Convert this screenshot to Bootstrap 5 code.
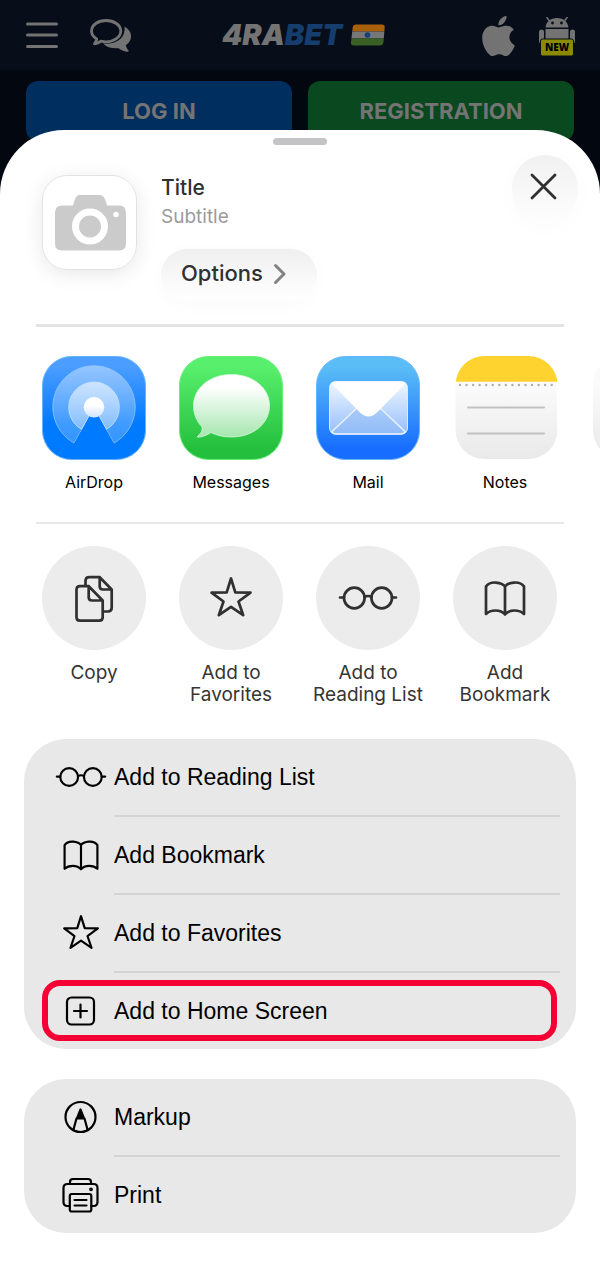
<!DOCTYPE html>
<html lang="en">
<head>
<meta charset="utf-8">
<meta name="viewport" content="width=device-width, initial-scale=1">
<title>Share</title>
<link href="https://cdn.jsdelivr.net/npm/bootstrap@5.3.0/dist/css/bootstrap.min.css" rel="stylesheet">
<style>
  body { background: #03070f; font-family: Inter, "Liberation Sans", sans-serif; color: #000; overflow-x: hidden; }
  button { font: inherit; color: inherit; }
  svg { display: block; flex-shrink: 0; }
  .plain { background: none; border: 0; padding: 0; }
  .site-bar { height: 70px; background: #070e19; padding: 0 25px 0 26px; color: #737373; }
  .brand { width: 170px; font-size: 29px; line-height: 32px; font-weight: 900; font-style: italic; color: #737373; text-decoration: none; }
  .brand b { font-weight: 900; color: #153d6e; }
  .auth { padding: 11px 26px 0; gap: 16px; }
  .auth .btn { height: 60px; border-radius: 12px; border: 0; font-size: 22px; font-weight: 700; color: #747474; background: #002e5f; }
  .auth .btn.join { background: #0a481f; }
  .sheet { position: relative; background: #fff; border-radius: 64px 64px 0 0; margin-top: -11px; min-height: calc(100vh - 130px); }
  .grabber { width: 54px; height: 7px; border-radius: 4px; background: #c4c4c6; margin: 8px auto 0; }
  .sheet-head { padding: 10px 22px 23px 42px; }
  .app-thumb { width: 95px; height: 95px; border-radius: 25px; border: 1px solid #e2e2e2; box-shadow: 0 4px 20px #00000018; margin-top: 20px; }
  .head-text { margin: 21px 0 0 24px; }
  .head-text h1 { font-size: 21px; line-height: 24px; font-weight: 500; color: #303030; margin: 0; }
  .head-text p { font-size: 19px; line-height: 24px; color: #9b9b9b; margin: 5px 0 20px; }
  .options { height: 52px; width: 156px; border-radius: 26px; padding: 0 0 3px 20px; font-size: 22px; font-weight: 500; color: #303030; background: linear-gradient(#efefef, #fefefe 90%); box-shadow: 0 4px 22px #00000005; }
  .close-btn { width: 66px; height: 68px; border-radius: 34px; background: linear-gradient(#f1f1f1, #fefefe); box-shadow: 0 4px 24px #00000005; color: #303030; padding: 0 3px 4px 0; }
  .rule { height: 3px; background: #e4e4e4; margin: 0 36px; }
  .rule.thin { height: 2px; background: #e8e8e8; }
  .strip { gap: 33px; padding: 0 0 0 42px; overflow: hidden; }
  .strip > button { width: 104px; flex: none; white-space: nowrap; }
  .apps { margin: 29px 0 28px; }
  .apps span { font-size: 16px; line-height: 24px; margin-top: 10px; }
  .acts { margin: 22px 0 33px; }
  .acts span { font-size: 19px; line-height: 22px; margin-top: 12px; color: #353535; }
  .disc { width: 104px; height: 104px; border-radius: 50%; background: #ececec; color: #303030; }
  .line-icon { fill: none; stroke: currentColor; stroke-width: 2.5; stroke-linecap: round; stroke-linejoin: round; }
  .line-icon.fine { stroke-width: 2.2; }
  .disc .line-icon { stroke-width: 2.7; }
  .panel { background: #e8e8e8; border-radius: 42px; margin: 0 24px 30px; }
  .panel-row { position: relative; height: 76px; width: 100%; padding-left: 31px; gap: 7px; font-family: "Liberation Sans", Arial, sans-serif; font-size: 23px; text-align: left; }
  .split { height: 2px; background: #d4d4d4; margin: 0 16px 0 90px; }
  .marked::after { content: ""; position: absolute; inset: 7px 19px 8px 18px; border: 6px solid #f40034; border-radius: 18px; }
</style>
</head>
<body>
<svg width="0" height="0" class="position-absolute" aria-hidden="true">
  <symbol id="i-glasses" viewBox="22.500 30.500 60 44"><circle cx="38.800" cy="52.500" r="10.300"/><circle cx="66.200" cy="52.500" r="10.300"/><path d="M24.500 52h4M76.500 52h4M49 51.500q3.500-2 7 0"/></symbol>
  <symbol id="i-book" viewBox="22.500 30.500 60 44"><path d="M52.500 41C49.500 37 38 34.500 33.500 41V68.500C38 64 48 63.500 52.500 69C57 63.500 67 64 71.500 68.500V41C67 34.500 55.500 37 52.500 41ZM52.500 41V69"/></symbol>
  <symbol id="i-star" viewBox="22.500 30.500 60 44"><path d="M52.500 33L56.800 46.900L72 47.200L60 56L64.700 69.700L52.500 61.300L40.300 69.700L45 56L33 47.200L48.200 46.900Z"/></symbol>
</svg>

<header class="site-bar d-flex align-items-center justify-content-between">
  <div class="d-flex align-items-center">
    <button class="plain me-2" aria-label="Menu"><svg width="32" height="36" viewBox="0 0 32 36" stroke="currentColor" stroke-width="3.200" stroke-linecap="round"><path d="M1.600 7h28.800M1.600 18h28.800M1.600 29.500h28.800"/></svg></button>
    <button class="plain ms-4" aria-label="Chat"><svg width="42" height="36" viewBox="0 0 42 36"><path d="M16 3.500C24 3.500 30.800 8 30.800 14S24 24.800 16 24.800c-2 0-3.500-.300-5-.700-2 1.500-4 2.300-6.500 2.800 1.200-1.600 2-3.200 2.200-4.900C3.500 20 1.500 17.200 1.500 14 1.500 8 8 3.500 16 3.500Z" fill="none" stroke="currentColor" stroke-width="2.800" stroke-linejoin="round"/><path d="M34.500 9.500c4 2.500 7 6 6.500 10.500-.300 3.500-2.200 6.200-5.200 8.200.5 2 1.500 3.800 3 5.600-.3.900-1 1.200-2 1-3.200-.6-5.800-1.900-8.200-3.600-6 .6-11.600-.7-15.600-4.700 10.500 1 18-3 20.500-9 1-2.700 1.300-5.200 1-8Z" fill="currentColor"/></svg></button>
  </div>
  <a href="#" class="brand d-flex align-items-center"><span>4RA<b>BET</b></span>
    <svg class="ms-2" width="36" height="24" viewBox="0 0 36 24"><defs><clipPath id="flag"><path d="M6 1.500H32q3 0 2.700 3L33.500 19q-.5 3.500-4 3.500H4q-3.500 0-3-3.500L2.700 4.500Q3 1.500 6 1.500Z"/></clipPath></defs><g clip-path="url(#flag)"><path fill="#a9600d" d="M0 1h36v7.500H0z"/><path fill="#777" d="M0 8.500h36v7H0z"/><path fill="#395f25" d="M0 15.500h36V23H0z"/></g><circle cx="17.500" cy="12" r="2.800" fill="#123f79"/></svg></a>
  <div class="d-flex align-items-center pt-1">
    <a href="#" class="text-reset me-4" aria-label="iOS app"><svg width="33" height="42" viewBox="1.400 0 13.200 16.800" fill="currentColor"><path d="M11.182.008C11.148-.03 9.923.023 8.857 1.180c-1.066 1.156-.902 2.482-.878 2.516s1.520.087 2.475-1.258.762-2.391.728-2.430Zm3.314 11.733c-.048-.096-2.325-1.234-2.113-3.422s1.675-2.789 1.698-2.854-.597-.790-1.254-1.157a3.700 3.700 0 0 0-1.563-.434c-.108-.003-.483-.095-1.254.116-.508.139-1.653.589-1.968.607-.316.018-1.256-.522-2.267-.665-.647-.125-1.333.131-1.824.328-.490.196-1.422.754-2.074 2.237-.652 1.482-.311 3.830-.067 4.560s.625 1.924 1.273 2.796c.576.984 1.340 1.667 1.659 1.899s1.219.386 1.843.067c.502-.308 1.408-.485 1.766-.472.357.013 1.061.154 1.782.539.571.197 1.111.115 1.652-.105.541-.221 1.324-1.059 2.238-2.758q.520-1.185.473-1.282"/></svg></a>
    <a href="#" class="text-reset" aria-label="Android app"><svg width="36" height="40" viewBox="0 0 36 40"><g fill="currentColor"><path d="M6.500 10.500C7 5 11.500 1 18 1s11 4 11.500 9.500ZM6.500 12h23v12h-23z"/><rect y="12.500" width="5" height="14" rx="2.500"/><rect x="31" y="12.500" width="5" height="14" rx="2.500"/></g><path d="M7.500 0l3 4M28.500 0l-3 4" stroke="currentColor" stroke-width="1.500"/><circle cx="13.500" cy="6" r="1.400" fill="#070e19"/><circle cx="22.500" cy="6" r="1.400" fill="#070e19"/><rect x="1.500" y="22" width="33" height="17" rx="2" fill="#8b8a00" stroke="#070e19"/><text x="18" y="34" text-anchor="middle" font-size="10" font-weight="800" fill="#000" font-family="Open Sans, sans-serif">NEW</text></svg></a>
  </div>
</header>

<div class="auth d-flex">
  <button class="btn flex-fill w-50">LOG IN</button>
  <button class="btn join flex-fill w-50">REGISTRATION</button>
</div>

<main class="sheet overflow-hidden">
  <div class="grabber"></div>
  <div class="sheet-head d-flex align-items-start">
    <div class="app-thumb"><svg width="93" height="93" viewBox="0 0 93 93"><path d="M31 26q2-7 5-7h21q4 0 6 7l1 3.500h12q7 0 7 7v31q0 7-7 7H19q-7 0-7-7v-31q0-7 7-7h11Z" fill="#cbcbcb"/><circle cx="47" cy="50.500" r="14.500" fill="#cbcbcb" stroke="#fff" stroke-width="7"/><circle cx="73" cy="38.500" r="2.700" fill="#fff"/></svg></div>
    <div class="head-text flex-grow-1">
      <h1>Title</h1>
      <p>Subtitle</p>
      <button class="plain options d-flex align-items-center">Options<svg class="ms-2" width="20" height="24" viewBox="0 0 20 24" fill="none" stroke="#828282" stroke-width="3" stroke-linecap="round" stroke-linejoin="round"><path d="M4.500 3.500L13 12l-8.500 8.500"/></svg></button>
    </div>
    <button class="plain close-btn d-flex align-items-center justify-content-center" aria-label="Close"><svg width="28" height="28" viewBox="0 0 28 28" stroke="currentColor" stroke-width="2.800" stroke-linecap="round"><path d="M2 2l23 23M25 2L2 25"/></svg></button>
  </div>
  <div class="rule"></div>

  <div class="strip apps d-flex">
    <button class="plain d-flex flex-column align-items-center">
      <svg width="104" height="104" viewBox="0 0 104 104"><defs><linearGradient id="gA" x2="0" y2="1"><stop offset=".100" stop-color="#4b9dff"/><stop offset=".650" stop-color="#007aff"/></linearGradient><linearGradient id="gA1" x2="0" y2="1"><stop stop-color="#fff" stop-opacity=".400"/><stop offset="1" stop-color="#fff" stop-opacity=".200"/></linearGradient><linearGradient id="gA2" x2="0" y2="1"><stop stop-color="#fff" stop-opacity=".600"/><stop offset="1" stop-color="#fff" stop-opacity=".350"/></linearGradient><linearGradient id="gA3" x2="0" y2="1"><stop offset=".400" stop-color="#fff"/><stop offset="1" stop-color="#d3e3fb"/></linearGradient></defs><rect x=".500" y=".500" width="103" height="103" rx="29" fill="url(#gA)" stroke="#63b4ff"/><path d="M52 51.300L32 87A41.200 41.200 0 1 1 72 87Z" fill="url(#gA1)" stroke="#9bcaff" stroke-opacity=".700"/><path d="M52 51.300L39.500 73.300A25.300 25.300 0 1 1 64.500 73.300Z" fill="url(#gA2)" stroke="#cde3ff" stroke-opacity=".800"/><path d="M52 52L32.500 87.500h39Z" fill="#007aff"/><circle cx="52" cy="51.300" r="10.300" fill="url(#gA3)"/></svg>
      <span>AirDrop</span></button>
    <button class="plain d-flex flex-column align-items-center">
      <svg width="104" height="104" viewBox="0 0 104 104"><defs><linearGradient id="gM" x2="0" y2="1"><stop offset=".100" stop-color="#57ef6c"/><stop offset=".900" stop-color="#25bf3e"/></linearGradient><linearGradient id="gM1" x2="0" y2="1"><stop offset=".200" stop-color="#fff"/><stop offset="1" stop-color="#a5e6ae"/></linearGradient></defs><rect x=".500" y=".500" width="103" height="103" rx="29" fill="url(#gM)" stroke="#68ee7b"/><path d="M52.500 18.500C74 18.500 90.500 32 90.500 49.700S74 81 52.500 81c-8 0-14.500-1.500-20.500-4.500-4 2.500-8.500 4.500-13 4.700-.800 0-.800-.700-.200-1.200 3.500-3 5.200-6 3.900-9.500C17.500 65 14.500 57.500 14.500 49.700 14.500 32 31 18.500 52.500 18.500Z" fill="url(#gM1)" stroke="#d6f9db" stroke-width=".800"/></svg>
      <span>Messages</span></button>
    <button class="plain d-flex flex-column align-items-center">
      <svg width="104" height="104" viewBox="0 0 104 104"><defs><linearGradient id="gE" x2="0" y2="1"><stop offset=".100" stop-color="#5bbdf6"/><stop offset=".900" stop-color="#176dff"/></linearGradient><linearGradient id="gE1" x2="0" y2="1"><stop stop-color="#f1f7ff"/><stop offset="1" stop-color="#94bffb"/></linearGradient></defs><rect x=".500" y=".500" width="103" height="103" rx="29" fill="url(#gE)" stroke="#62b4fc"/><rect x="13.500" y="25.500" width="78" height="52.500" rx="6" fill="url(#gE1)" stroke="#d9eaff"/><path d="M15.500 76L41 52h23l25.500 24q-2 2-5 2H20q-3 0-4.500-2Z" fill="#8db8f4" fill-opacity=".450" stroke="#e9f3ff" stroke-width="1.500"/><path d="M15 27q2-1.500 5-1.500h65q3 0 5 1.500L61 56.500q-8.500 8-17 0Z" fill="#fff"/></svg>
      <span>Mail</span></button>
    <button class="plain d-flex flex-column align-items-center">
      <svg width="104" height="104" viewBox="0 0 104 104"><defs><linearGradient id="gN" x2="0" y2="1"><stop offset=".300" stop-color="#fafafa"/><stop offset="1" stop-color="#e9e9e9"/></linearGradient><clipPath id="cN"><rect x="2.500" y="0" width="102" height="103" rx="29"/></clipPath></defs><g clip-path="url(#cN)"><path fill="url(#gN)" d="M2 0h103v104H2z"/><path fill="#ffd32f" d="M2 0h103v25.800H2z"/></g><path d="M7 29h94" stroke="#b3ada5" stroke-width="2.400" stroke-linecap="round" stroke-dasharray="0 6.550"/><path d="M15 51.500h76M15 77.500h76" stroke="#c1c1c1" stroke-width="2" stroke-linecap="round"/></svg>
      <span>Notes</span></button>
    <button class="plain d-flex flex-column" aria-label="More">
      <svg width="104" height="104" viewBox="0 0 104 104"><rect x="3" width="101" height="103" rx="29" fill="url(#gN)"/></svg></button>
  </div>
  <div class="rule thin"></div>

  <div class="strip acts d-flex align-items-start">
    <button class="plain d-flex flex-column align-items-center">
      <div class="disc"><svg class="line-icon" width="104" height="104" viewBox="0 0 104 104"><path d="M46.700 40.200H38q-3.500 0-3.500 3.500v27.500q0 3.500 3.500 3.500h19.200q3.500 0 3.500-3.500V54.500ZM46.700 40.200v11q0 3.300 3.300 3.300h10.700M43.500 40v-5q0-3.800 3.800-3.800H57.700L69.700 43.500v18.200q0 3.800-3.800 3.800H61M57.700 31.200v9q0 3.300 3.300 3.300h8.700"/></svg></div>
      <span>Copy</span></button>
    <button class="plain d-flex flex-column align-items-center">
      <div class="disc d-flex align-items-center justify-content-center"><svg class="line-icon" width="60" height="44"><use href="#i-star"/></svg></div>
      <span>Add to<br>Favorites</span></button>
    <button class="plain d-flex flex-column align-items-center">
      <div class="disc d-flex align-items-center justify-content-center"><svg class="line-icon" width="60" height="44"><use href="#i-glasses"/></svg></div>
      <span>Add to<br>Reading List</span></button>
    <button class="plain d-flex flex-column align-items-center">
      <div class="disc d-flex align-items-center justify-content-center"><svg class="line-icon" width="60" height="44"><use href="#i-book"/></svg></div>
      <span>Add<br>Bookmark</span></button>
  </div>

  <div class="panel">
    <button class="plain panel-row d-flex align-items-center"><svg class="line-icon" width="52" height="38"><use href="#i-glasses"/></svg>Add to Reading List</button>
    <div class="split"></div>
    <button class="plain panel-row d-flex align-items-center"><svg class="line-icon" width="52" height="38"><use href="#i-book"/></svg>Add Bookmark</button>
    <div class="split"></div>
    <button class="plain panel-row d-flex align-items-center"><svg class="line-icon" width="52" height="38"><use href="#i-star"/></svg>Add to Favorites</button>
    <div class="split"></div>
    <button class="plain panel-row marked d-flex align-items-center"><svg class="line-icon fine" width="52" height="38" viewBox="0 0 52 38"><rect x="12" y="5.500" width="27" height="27" rx="4.500"/><path d="M25.500 12.500v13M19 19h13"/></svg>Add to Home Screen</button>
  </div>
  <div class="panel">
    <button class="plain panel-row d-flex align-items-center"><svg class="line-icon fine" width="52" height="38" viewBox="1 0 52 38"><circle cx="26.500" cy="19" r="15"/><path d="M22.500 20.500L19.500 31.500M30.500 20.500L33.500 31.500"/><path d="M26.500 11.500L30 20.500H23Z" fill="currentColor"/></svg>Markup</button>
    <div class="split"></div>
    <button class="plain panel-row d-flex align-items-center"><svg class="line-icon fine" width="52" height="38" viewBox="1 0 52 38"><path d="M15.500 30h-2q-4 0-4-4V12q0-4 4-4h26q4 0 4 4v14q0 4-4 4h-2M16 8V6q0-3 3-3h15q3 0 3 3v2"/><rect x="15.800" y="18" width="21.500" height="17.500" rx="2"/><path d="M20.500 24h12M20.500 29.500h12"/><circle cx="37" cy="13.300" r=".800"/></svg>Print</button>
  </div>
</main>
<script src="https://cdn.jsdelivr.net/npm/bootstrap@5.3.0/dist/js/bootstrap.bundle.min.js"></script>
</body>
</html>
